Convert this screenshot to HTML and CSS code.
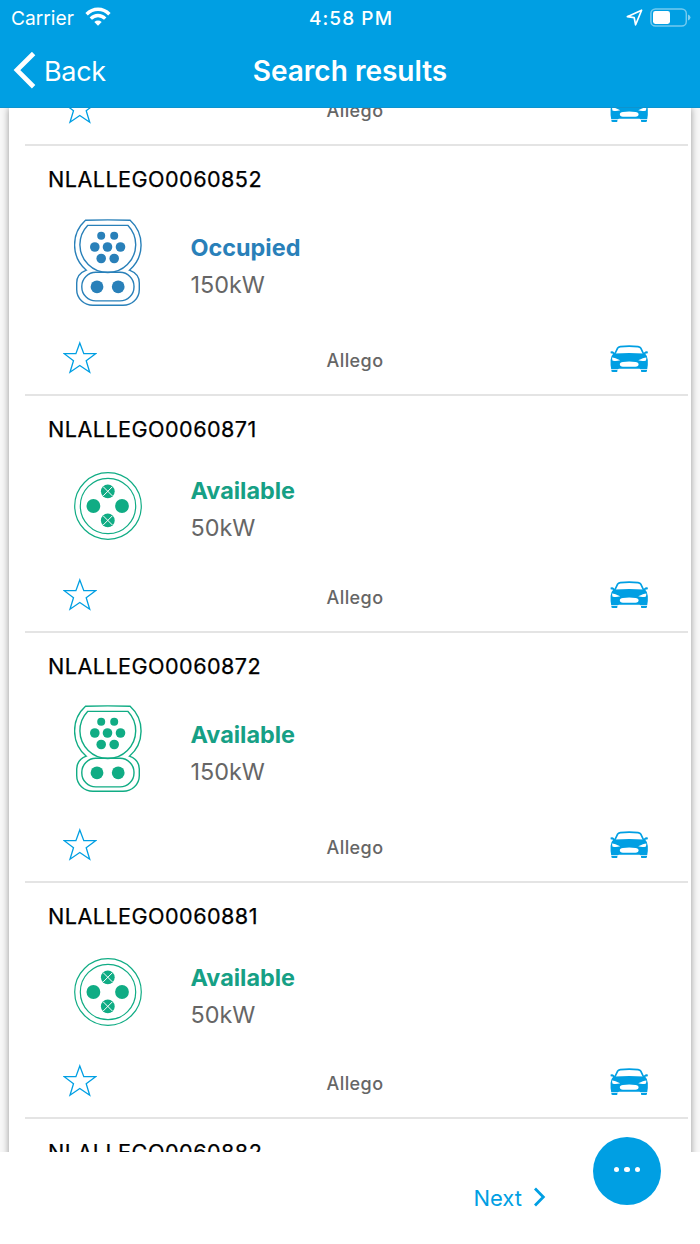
FILE: index.html
```html
<!DOCTYPE html>
<html>
<head>
<meta charset="utf-8">
<title>Search results</title>
<link rel="stylesheet" href="styles.css">
</head>
<body>

<!-- icons -->
<svg class="defs">
	<symbol id="ccs" viewBox="0 0 68 88">
		<g fill="none" stroke="currentColor" stroke-width="1.4">
			<path d="M11.5 1.3Q33.8.4 56.1 1.3A33.2 33.2 0 0 1 55.4 51.2C61 53.3 65.3 58 65.3 64V70.5C65.3 79.5 58 86.3 49 86.3H19C10 86.3 2.7 79.5 2.7 70.5V64C2.7 58 7 53.3 12.3 51.2A33.2 33.2 0 0 1 11.5 1.3Z"/>
			<path d="M13.6 6.4H54A27.9 27.9 0 1 1 13.6 6.4Z"/>
			<rect x="7.8" y="53.3" width="52.2" height="28.6" rx="14"/>
		</g>
		<g fill="currentColor">
			<circle cx="27.2" cy="16.8" r="4"/><circle cx="40.2" cy="16.8" r="4"/>
			<circle cx="20.8" cy="28" r="4.8"/><circle cx="33.5" cy="28" r="4.8"/><circle cx="46.5" cy="28" r="4.8"/>
			<circle cx="27.2" cy="39.5" r="4.8"/><circle cx="40.2" cy="39.5" r="4.8"/>
			<circle cx="23" cy="67.8" r="6.4"/><circle cx="44.2" cy="67.8" r="6.4"/>
		</g>
	</symbol>
	<symbol id="type2" viewBox="0 0 68 68">
		<g fill="none" stroke="currentColor" stroke-width="1.2">
			<circle cx="34" cy="34" r="33.3"/>
			<circle cx="34" cy="34" r="27.7"/>
		</g>
		<g fill="currentColor">
			<circle cx="19.4" cy="34" r="6.9"/><circle cx="48" cy="34" r="6.9"/>
			<circle cx="33.8" cy="19.3" r="6.9"/><circle cx="33.8" cy="48.4" r="6.9"/>
		</g>
		<path d="M29.2 14.7L38.4 23.9M38.4 14.7L29.2 23.9M29.2 43.8L38.4 53M38.4 43.8L29.2 53" stroke="#fff" stroke-width="1"/>
	</symbol>
	<symbol id="star" viewBox="0 0 34 34">
		<path d="M16.8 2L20.8 12.7H32.6L23.2 19.7L26.7 31.2L16.8 24.5L7 31.2L10.5 19.7L1.2 12.7H12.9Z" fill="none" stroke="currentColor" stroke-width="1.3"/>
	</symbol>
	<symbol id="car" viewBox="0 0 38 28">
		<path d="M4.8 9L7.6 3.2Q8.3 1.9 10.3 1.6Q19.2.6 28.1 1.6Q30.1 1.9 30.8 3.2L33.6 9" fill="none" stroke="currentColor" stroke-width="1.7"/>
		<path d="M.6 6.6Q2.5 5.6 4 7.2L5.2 8.6Q19.2 7.6 33.2 8.6L34.4 7.2Q35.9 5.6 37.8 6.6V8.2L35.2 8.7Q37.8 11 37.8 15V20L37.2 24.2H30.5L29.5 23.8H8.9L7.9 24.2H1.2L.6 20V15Q.6 11 3.2 8.7L.6 8.2Z" fill="currentColor"/>
		<path d="M1.4 25H7.4V26.2Q7.4 27 6.6 27H2.8Q1.4 27 1.4 25.9ZM37 25H31V26.2Q31 27 31.8 27H35.6Q37 27 37 25.9Z" fill="currentColor"/>
		<path d="M2 12.4Q5 12.4 10.2 15.3Q5.5 16.6 2.4 15.4ZM36.4 12.4Q33.4 12.4 28.2 15.3Q32.9 16.6 36 15.4ZM13 16.9Q19.2 16.1 25.4 16.9Q28.6 17.4 28.6 19.2Q28.6 21.5 25.4 21.8H13Q9.8 21.5 9.8 19.2Q9.8 17.4 13 16.9Z" fill="#fff"/>
	</symbol>
</svg>

<div class="header">
	<div class="status">
		<div class="carrier"><span>Carrier</span>
			<svg class="wifi" width="26" height="19" viewBox="0 0 26 19">
				<g fill="none" stroke="#fff" stroke-width="3.4">
					<path d="M1.6 7.2Q6.5 2.2 13 2.2T24.4 7.2"/>
					<path d="M5.8 11.6Q9 8.5 13 8.5T20.2 11.6"/>
				</g>
				<path d="M9.3 15Q13 12.1 16.7 15L13 18.7Z" fill="#fff"/>
			</svg>
		</div>
		<div class="time">4:58 PM</div>
		<div class="indicators">
			<svg width="17" height="17" viewBox="0 0 17 17"><path d="M15.6 1.2L1.3 7.7L8.2 8.6L9.6 15.8Z" fill="none" stroke="#fff" stroke-width="1.7" stroke-linejoin="round"/></svg>
			<svg width="41" height="19" viewBox="0 0 41 19">
				<rect x=".9" y=".9" width="35.4" height="17.2" rx="4.6" fill="none" stroke="#fff" stroke-width="1.5" opacity=".45"/>
				<rect x="3" y="3" width="17" height="13" rx="2.4" fill="#fff"/>
				<path d="M38 6.4Q40.5 7.4 40.5 9.5T38 12.6Z" fill="#fff" opacity=".5"/>
			</svg>
		</div>
	</div>
	<div class="nav">
		<a class="back"><svg width="24" height="38" viewBox="0 0 24 38"><path d="M20.6 1.5L4 18.1L20.6 34.7" fill="none" stroke="#fff" stroke-width="4.8"/></svg><span>Back</span></a>
		<h1>Search results</h1>
	</div>
</div>

<div class="content">
	<div class="list">
		<div class="item first">
			<div class="foot"><svg class="star"><use href="#star"/></svg><span>Allego</span><svg class="car"><use href="#car"/></svg></div>
		</div>
		<div class="item occupied">
			<h2>NLALLEGO0060852</h2>
			<div class="info">
				<svg class="ccs"><use href="#ccs"/></svg>
				<div class="text"><p class="state">Occupied</p><p class="power">150kW</p></div>
			</div>
			<div class="foot"><svg class="star"><use href="#star"/></svg><span>Allego</span><svg class="car"><use href="#car"/></svg></div>
		</div>
		<div class="item small">
			<h2>NLALLEGO0060871</h2>
			<div class="info">
				<svg class="type2"><use href="#type2"/></svg>
				<div class="text"><p class="state">Available</p><p class="power">50kW</p></div>
			</div>
			<div class="foot"><svg class="star"><use href="#star"/></svg><span>Allego</span><svg class="car"><use href="#car"/></svg></div>
		</div>
		<div class="item">
			<h2>NLALLEGO0060872</h2>
			<div class="info">
				<svg class="ccs"><use href="#ccs"/></svg>
				<div class="text"><p class="state">Available</p><p class="power">150kW</p></div>
			</div>
			<div class="foot"><svg class="star"><use href="#star"/></svg><span>Allego</span><svg class="car"><use href="#car"/></svg></div>
		</div>
		<div class="item small">
			<h2>NLALLEGO0060881</h2>
			<div class="info">
				<svg class="type2"><use href="#type2"/></svg>
				<div class="text"><p class="state">Available</p><p class="power">50kW</p></div>
			</div>
			<div class="foot"><svg class="star"><use href="#star"/></svg><span>Allego</span><svg class="car"><use href="#car"/></svg></div>
		</div>
		<div class="item">
			<h2>NLALLEGO0060882</h2>
		</div>
	</div>
</div>

<div class="bottom">
	<a class="next">Next <svg width="14" height="22" viewBox="0 0 14 22"><path d="M2 1.6L10.3 10L2 18.4" fill="none" stroke="currentColor" stroke-width="2.8"/></svg></a>
</div>
<div class="fab"><i></i><i></i><i></i></div>

</body>
</html>
```
FILE: styles.css
```css
* {margin:0; padding:0; box-sizing:border-box;}

body {width:700px; height:1244px; overflow:hidden; position:relative; background:#fff; font-family:Inter, "Liberation Sans", sans-serif;}
svg {display:block; flex:none;}
.defs {display:none;}

/* header */
.header {height:108px; background:#009fe3; border-bottom:1px solid #0d93ce; color:#fff;}
.status {display:grid; grid-template-columns:1fr auto 1fr; align-items:center; height:35px; padding:0 9px 0 11px; font-size:19px;}
.carrier {display:flex; align-items:center; font-size:19.2px;}
.carrier span {width:74px;}
.wifi {margin-top:-3px;}
.time {font-weight:500; letter-spacing:1.1px; padding-top:1px;}
.indicators {display:flex; justify-content:flex-end; align-items:center; gap:7px;}
.nav {display:grid; grid-template-columns:1fr auto 1fr; align-items:center; height:72px;}
.back {display:flex; align-items:center; gap:7px; padding-left:13px; font-size:27px; letter-spacing:-0.3px;}
.nav h1 {font-size:28px; font-weight:600; line-height:72px;}

/* list */
.content {height:1044px; padding:0 9px; overflow:hidden; background:#f7f7f7;}
.list {height:1060px; padding:0 3px 0 16px; background:#fff; box-shadow:0 0 7px rgba(0,0,0,0.4);}
.item {height:250px; border-bottom:2px solid #e4e4e4; padding:0 38px 0 23px; color:#10ac84;}
.item.small {height:236.5px;}
.item.first {height:38px; display:flex; align-items:flex-end;}
.item.first .foot {width:100%; height:71px; margin:0;}
.item h2 {height:66px; line-height:66px; font-size:21.6px; font-weight:400; color:#000; letter-spacing:0.45px; -webkit-text-stroke:0.25px #000;}
.info {display:flex; align-items:center; height:101px; padding-left:26px;}
.small .info {height:87.5px;}
.ccs {width:68px; height:88px;}
.type2 {width:68px; height:68px;}
.text {margin-left:48.5px; padding-top:7px;}
.text p {height:37px; line-height:37px; font-size:23.4px;}
.text .state {font-weight:700; color:#16a085;}
.text .power {color:#666;}
.occupied, .occupied .text .state {color:#2980b9;}
.foot {display:flex; justify-content:space-between; align-items:center; height:69px; margin-top:11px; padding:0 2px 0 15px; color:#009fe3;}
.foot span {font-size:18px; font-weight:500; letter-spacing:0.4px; color:#666; padding:4px 0 0 3px;}
.star {width:34px; height:34px; margin-bottom:1px;}
.car {width:38px; height:28px;}

/* bottom bar */
.bottom {display:flex; justify-content:flex-end; height:92px; padding-right:153px; background:#fff;}
.next {display:flex; align-items:center; gap:11px; height:92px; font-size:22px; color:#009fe3;}
.fab {position:absolute; left:593px; top:1137px; width:68px; height:68px; border-radius:50%; background:#009fe3; display:flex; justify-content:center; align-items:center; gap:5px; padding-bottom:3px;}
.fab i {width:5.4px; height:5.4px; border-radius:50%; background:#fff;}
```
